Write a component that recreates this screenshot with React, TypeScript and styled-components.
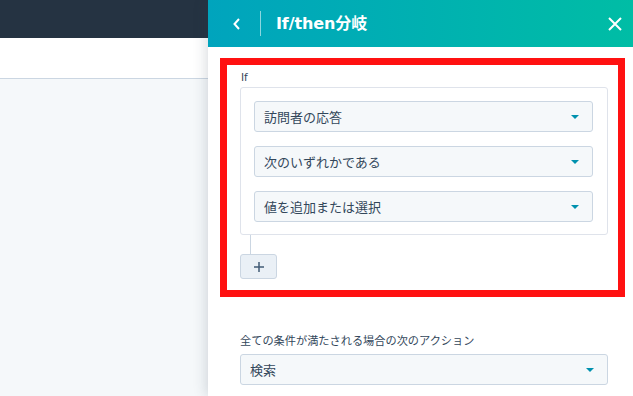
import React from "react";
import styled, { createGlobalStyle } from "styled-components";

const GlobalStyle = createGlobalStyle`
  html, body {
    margin: 0;
    padding: 0;
  }
  body {
    font-family: "Noto Sans CJK JP", "DejaVu Sans", sans-serif;
    color: #33475b;
  }
`;

const Screen = styled.div`
  width: 633px;
  height: 396px;
  overflow: hidden;
  display: flex;
  background: #f5f8fa;
`;

const Page = styled.div`
  width: 208px;
  display: flex;
  flex-direction: column;
`;

const TopNav = styled.div`
  height: 38px;
  background: #253342;
`;

const PageHeader = styled.div`
  height: 40px;
  background: #ffffff;
  border-bottom: 1px solid #cbd6e2;
`;

const PageBody = styled.div`
  flex: 1;
  background: #f5f8fa;
`;

const Panel = styled.aside`
  width: 425px;
  display: flex;
  flex-direction: column;
  background: #ffffff;
  box-shadow: -2px 0 12px rgba(45, 62, 80, 0.18);
  position: relative;
  z-index: 1;
`;

const PanelHeader = styled.header`
  height: 47px;
  flex-shrink: 0;
  display: flex;
  align-items: center;
  background: linear-gradient(to right, #00a4bd, #00bda5);
  color: #ffffff;
`;

const IconButton = styled.button`
  border: 0;
  background: none;
  padding: 0;
  display: flex;
  align-items: center;
  justify-content: center;
  color: #ffffff;
  cursor: pointer;
`;

const Divider = styled.div`
  width: 1px;
  height: 25px;
  background: rgba(255, 255, 255, 0.55);
  margin: 0 15px 0 19px;
`;

const Title = styled.h1`
  margin: 0;
  flex: 1;
  font-family: "DejaVu Sans", "Noto Sans CJK JP", sans-serif;
  font-size: 16px;
  font-weight: 700;
  line-height: 20px;
  letter-spacing: -0.1px;
`;

const PanelBody = styled.div`
  padding: 11px 8px 0 12px;
  display: flex;
  flex-direction: column;
`;

const Highlight = styled.div`
  border: 7px solid #ff1111;
  padding: 5px 10px 11px 13px;
  display: flex;
  flex-direction: column;
  align-items: flex-start;
`;

const SmallLabel = styled.div`
  font-family: "DejaVu Sans", sans-serif;
  font-size: 10.5px;
  line-height: 14px;
  margin: 0 0 3px 1px;
`;

const Card = styled.div`
  width: 368px;
  box-sizing: border-box;
  border: 1px solid #dfe3eb;
  border-radius: 3px;
  padding: 13px 14px 12px 13px;
  display: flex;
  flex-direction: column;
  gap: 14px;
`;

const Select = styled.div<{ $width?: number }>`
  height: 31px;
  box-sizing: border-box;
  width: ${(p) => (p.$width ? `${p.$width}px` : "100%")};
  background: #f5f8fa;
  border: 1px solid #cbd6e2;
  border-radius: 3px;
  display: flex;
  align-items: center;
  justify-content: space-between;
  padding: 0 13px 0 9px;
  font-size: 13px;
  color: #33475b;
`;

const Caret = styled.span`
  width: 0;
  height: 0;
  border-left: 4px solid transparent;
  border-right: 4px solid transparent;
  border-top: 4px solid #0091ae;
  margin-top: 1px;
`;

const Connector = styled.div`
  width: 1px;
  height: 19px;
  margin-left: 10px;
  background: #cbd6e2;
`;

const AddButton = styled.button`
  width: 37px;
  height: 25px;
  box-sizing: border-box;
  border: 1px solid #cbd6e2;
  border-radius: 3px;
  background: #eaf0f6;
  display: flex;
  align-items: center;
  justify-content: center;
  padding: 0;
  color: #425b76;
`;

const Section = styled.div`
  margin: 35px 0 0 20px;
  display: flex;
  flex-direction: column;
  gap: 6px;
`;

const FieldLabel = styled.div`
  font-size: 11.2px;
  line-height: 16px;
  color: #33475b;
`;

function Dropdown({ value, width }: { value: string; width?: number }) {
  return (
    <Select $width={width}>
      <span>{value}</span>
      <Caret />
    </Select>
  );
}

export default function App() {
  const conditions = ["訪問者の応答", "次のいずれかである", "値を追加または選択"];

  return (
    <>
      <GlobalStyle />
      <Screen>
        <Page>
          <TopNav />
          <PageHeader />
          <PageBody />
        </Page>
        <Panel>
          <PanelHeader>
            <IconButton style={{ marginLeft: 25 }} aria-label="back">
              <svg width="8" height="12" viewBox="0 0 8 12">
                <path d="M6 1 L1.5 6 L6 11" fill="none" stroke="#fff" strokeWidth="2" />
              </svg>
            </IconButton>
            <Divider />
            <Title>If/then分岐</Title>
            <IconButton style={{ marginRight: 11 }} aria-label="close">
              <svg width="14" height="14" viewBox="0 0 14 14">
                <path d="M1 1 L13 13 M13 1 L1 13" fill="none" stroke="#fff" strokeWidth="2" />
              </svg>
            </IconButton>
          </PanelHeader>
          <PanelBody>
            <Highlight>
              <SmallLabel>If</SmallLabel>
              <Card>
                {conditions.map((c) => (
                  <Dropdown key={c} value={c} />
                ))}
              </Card>
              <Connector />
              <AddButton aria-label="add">
                <svg width="10" height="10" viewBox="0 0 10 10">
                  <path d="M5 0 V10 M0 5 H10" stroke="#425b76" strokeWidth="1.5" />
                </svg>
              </AddButton>
            </Highlight>
            <Section>
              <FieldLabel>全ての条件が満たされる場合の次のアクション</FieldLabel>
              <Dropdown value="検索" width={368} />
            </Section>
          </PanelBody>
        </Panel>
      </Screen>
    </>
  );
}
